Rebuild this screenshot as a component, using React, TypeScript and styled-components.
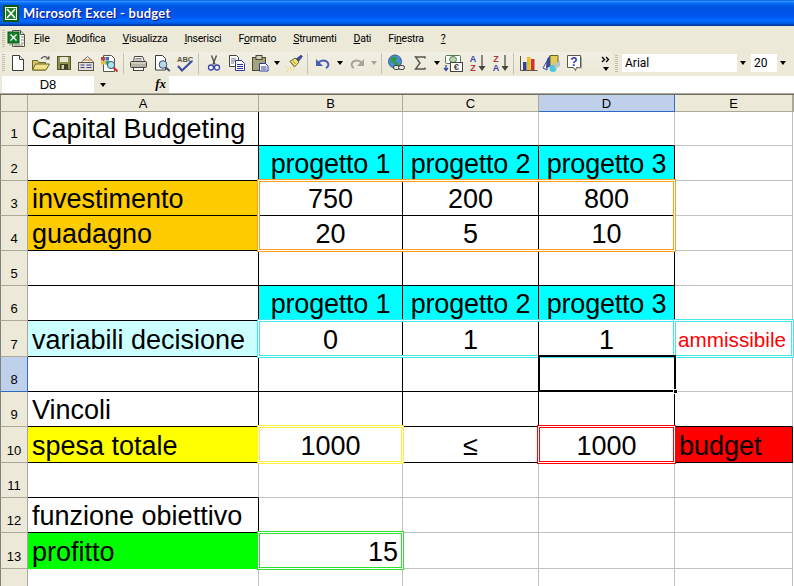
import React from "react";
import styled, { createGlobalStyle } from "styled-components";

const GlobalStyle = createGlobalStyle`
  html, body {
    margin: 0;
    padding: 0;
    background: #fff;
  }
`;

const Window = styled.div`
  width: 794px;
  height: 586px;
  overflow: hidden;
  display: flex;
  flex-direction: column;
  background: #ece9d8;
  font-family: "Liberation Sans", Arial, sans-serif;
`;

const TitleBar = styled.div`
  height: 26px;
  flex: none;
  display: flex;
  align-items: center;
  gap: 4px;
  padding-left: 3px;
  background: linear-gradient(180deg, #0058ee 0%, #3593ff 5%, #127dff 9%, #0262ee 16%, #0054e3 28%, #0055eb 56%, #005bf5 68%, #026afe 78%, #0062ef 86%, #0052d6 92%, #0040ab 96%, #003092 100%);
`;

const TitleText = styled.span`
  font-family: Lato, sans-serif;
  font-weight: bold;
  font-size: 13px;
  letter-spacing: 0.25px;
  color: #fff;
  text-shadow: 1px 1px 0 #0f1089;
`;

const MenuBar = styled.div`
  height: 26px;
  flex: none;
  display: flex;
  align-items: center;
`;

const Grip = styled.div<{ $h: number }>`
  width: 3px;
  height: ${(p) => p.$h}px;
  margin-left: 2px;
  flex: none;
  background: repeating-linear-gradient(180deg, #c1bea9 0 1px, transparent 1px 2px);
`;

const MenuIcon = styled.div`
  width: 29px;
  flex: none;
  display: flex;
  padding-left: 3px;
  box-sizing: border-box;
`;

const MenuItem = styled.span`
  font-family: Roboto, sans-serif;
  font-size: 10.5px;
  letter-spacing: -0.25px;
  line-height: 14px;
  color: #000;
  margin-right: 17px;
  u {
    text-underline-offset: 1px;
  }
`;

const ToolRow = styled.div`
  height: 24px;
  flex: none;
  display: flex;
  align-items: center;
`;

const Toolbar = styled.div<{ $w: number }>`
  width: ${(p) => p.$w}px;
  height: 24px;
  box-sizing: border-box;
  padding-bottom: 2px;
  flex: none;
  display: flex;
  align-items: center;
  background: linear-gradient(180deg, #f1efe3, #ece9d8);
`;

const ToolBtn = styled.div<{ $w?: number }>`
  width: ${(p) => p.$w ?? 23}px;
  height: 22px;
  flex: none;
  display: flex;
  align-items: center;
  justify-content: center;
`;

const ToolEnd = styled.div`
  flex: 1;
  display: flex;
  justify-content: flex-end;
  padding-right: 1px;
`;

const Sep = styled.div`
  width: 1px;
  height: 21px;
  margin: 0 3px 0 2px;
  flex: none;
  background: #c5c2b0;
`;

const DropArrow = styled.div<{ $off?: boolean }>`
  width: 0;
  height: 0;
  border-left: 3.5px solid transparent;
  border-right: 3.5px solid transparent;
  border-top: 4px solid ${(p) => (p.$off ? "#a6a498" : "#000")};
`;

const Combo = styled.div<{ $w: number }>`
  width: ${(p) => p.$w}px;
  height: 18px;
  box-sizing: border-box;
  flex: none;
  display: flex;
  align-items: center;
  background: #fff;
  font-family: Roboto, sans-serif;
  font-size: 12px;
  padding-left: 3px;
  margin: 0 2px 2px 0;
`;

const ComboText = styled.span`
  flex: 1;
`;

const ComboBtn = styled.div`
  width: 12px;
  height: 18px;
  flex: none;
  display: flex;
  align-items: center;
  justify-content: center;
  background: #ece9d8;
`;

const FormulaBar = styled.div`
  height: 17px;
  flex: none;
  display: flex;
  align-items: stretch;
`;

const NameBox = styled.div`
  width: 92px;
  margin-left: 2px;
  flex: none;
  background: #fff;
  font-size: 13px;
  line-height: 17px;
  text-align: center;
`;

const NameDrop = styled.div`
  width: 18px;
  flex: none;
  display: flex;
  align-items: center;
  justify-content: center;
`;

const FxBox = styled.div`
  width: 57px;
  box-sizing: border-box;
  padding-right: 3px;
  flex: none;
  text-align: right;
  font-family: "Liberation Serif", serif;
  font-style: italic;
  font-weight: bold;
  font-size: 13px;
  line-height: 16px;
`;

const FormulaInput = styled.div`
  flex: 1;
  background: #fff;
`;

const BarRule = styled.div`
  height: 2px;
  flex: none;
  background: linear-gradient(180deg, #aca899 50%, #716f64 50%);
`;

const columnWidths = [28, 231, 144, 136, 136, 118, 1];
const rowHeights = [17, 34, 35, 35, 35, 35, 35, 36, 35, 35, 36, 35, 35, 36, 35];

const Sheet = styled.div`
  flex: 1;
  display: grid;
  grid-template-columns: ${columnWidths.map((w) => `${w}px`).join(" ")};
  grid-template-rows: ${rowHeights.map((h) => `${h}px`).join(" ")};
  background: #fff;
  overflow: hidden;
`;

type Place = { $col: number; $row: number; $cols?: number; $rows?: number };

const placed = (p: Place) => `
  grid-column: ${p.$col + 1} / span ${p.$cols ?? 1};
  grid-row: ${p.$row + 1} / span ${p.$rows ?? 1};
`;

const ColHead = styled.div<Place & { $active?: boolean }>`
  ${placed}
  box-sizing: border-box;
  display: flex;
  align-items: center;
  justify-content: center;
  font-size: 13px;
  color: #000;
  background: ${(p) => (p.$active ? "#bfd0ea" : "#ece9d8")};
  border-right: 1px solid ${(p) => (p.$active ? "#316ac5" : "#aca899")};
  border-bottom: 1px solid ${(p) => (p.$active ? "#316ac5" : "#aca899")};
`;

const RowHead = styled.div<Place & { $active?: boolean }>`
  ${placed}
  box-sizing: border-box;
  display: flex;
  align-items: flex-end;
  justify-content: center;
  font-size: 13px;
  line-height: 15px;
  color: #000;
  padding-bottom: 4px;
  background: ${(p) => (p.$active ? "#bfd0ea" : "#ece9d8")};
  border-left: 1px solid #808080;
  border-right: 1px solid ${(p) => (p.$active ? "#316ac5" : "#aca899")};
  border-bottom: 1px solid ${(p) => (p.$active ? "#316ac5" : "#aca899")};
`;

const Cell = styled.div<
  Place & {
    $fill?: string;
    $right?: boolean;
    $bottom?: boolean;
    $align?: string;
    $ink?: string;
    $small?: boolean;
    $tight?: boolean;
  }
>`
  ${placed}
  box-sizing: border-box;
  min-width: 0;
  white-space: nowrap;
  overflow: hidden;
  padding: 0 4px 0 ${(p) => (p.$small ? 3 : 4)}px;
  display: flex;
  align-items: flex-end;
  justify-content: ${(p) => p.$align ?? "flex-start"};
  font-size: ${(p) => (p.$small ? "20.7px" : "27px")};
  letter-spacing: ${(p) => (p.$tight ? "-0.2px" : "0")};
  line-height: 32px;
  color: ${(p) => p.$ink ?? "#000"};
  background: ${(p) => p.$fill ?? "#fff"};
  border-right: 1px solid ${(p) => (p.$right ? "#000" : p.$fill ?? "#c0c0c0")};
  border-bottom: 1px solid ${(p) => (p.$bottom ? "#000" : p.$fill ?? "#c0c0c0")};
`;

const RangeMark = styled.div<Place & { $c: string }>`
  ${placed}
  margin: -2px -1px -1px -2px;
  border: 1px solid ${(p) => p.$c};
  box-shadow: inset 0 0 0 1px #fff, inset 0 0 0 2px ${(p) => p.$c};
  z-index: 2;
  pointer-events: none;
`;

const Selection = styled.div<Place>`
  ${placed}
  position: relative;
  margin: -2px -1px 0 -1px;
  border: 2px solid #000;
  z-index: 3;
`;

const Handle = styled.div`
  position: absolute;
  right: -4px;
  bottom: -4px;
  width: 5px;
  height: 5px;
  background: #000;
  border: 1px solid #fff;
  box-sizing: border-box;
`;

const Svg = styled.svg`
  display: block;
  flex: none;
  overflow: visible;
`;

const Ico = ({ children, w = 18, h = 18 }: { children: React.ReactNode; w?: number; h?: number }) => (
  <Svg width={w} height={h} viewBox={`0 0 ${w} ${h}`}>
    {children}
  </Svg>
);

const ExcelLogo = () => (
  <Ico w={16} h={17}>
    <rect x="0" y="0" width="16" height="17" fill="#0a5d0a" />
    <rect x="2" y="2" width="12" height="13" fill="#fff" />
    <rect x="3" y="3" width="10" height="11" fill="#1f7f2a" />
    <path d="M4 4l8 9M12 4l-8 9" stroke="#fff" strokeWidth="1.6" />
  </Ico>
);

const XlsDoc = () => (
  <Ico w={18} h={18}>
    <path d="M4.5 .5h8l4 4v12h-12z" fill="#fff" stroke="#55554a" />
    <path d="M12.5 .5v4h4" fill="#d8d6c8" stroke="#55554a" />
    <path d="M13 7h3M13 10h3M13 13h3M6 15h9" stroke="#8a8878" />
    <rect x="0" y="2" width="11" height="11" fill="#12802a" stroke="#0a5512" />
    <path d="M2.5 4.5l6 6M8.5 4.5l-6 6" stroke="#fff" strokeWidth="1.4" />
    <path d="M1 13.5h11v2h-11z" fill="#7f9f7f" opacity=".5" />
  </Ico>
);

const NewDoc = () => (
  <Ico>
    <path d="M3.5 1.5h7l4 4v11h-11z" fill="#fff" stroke="#3d3d38" />
    <path d="M10.5 1.5v4h4" fill="#e6e4d8" stroke="#3d3d38" />
  </Ico>
);

const OpenFolder = () => (
  <Ico w={20}>
    <path d="M1.5 6.5h5l1 2h7v7.5h-13z" fill="#d6c66a" stroke="#6a6528" />
    <path d="M1.5 16l3-6h14l-3.5 6z" fill="#f0e088" stroke="#6a6528" />
    <path d="M10 5c1.5-2.5 4-3 6-1.5" fill="none" stroke="#555" strokeWidth="1.2" />
    <path d="M14.5 5.5h4v-4z" fill="#555" />
  </Ico>
);

const Floppy = () => (
  <Ico>
    <rect x="2.5" y="2.5" width="13" height="13" fill="#8f8f4e" stroke="#55552b" />
    <rect x="5" y="3" width="8" height="5" fill="#e6e6d2" />
    <rect x="5" y="10" width="8" height="5.5" fill="#3e3e24" />
    <rect x="6.5" y="11" width="2.5" height="4" fill="#cfcfb2" />
  </Ico>
);

const MailDoc = () => (
  <Ico w={20}>
    <path d="M4.5 8l6-5.5 6 5.5v3h-12z" fill="#f4f2ec" stroke="#6f6f6a" />
    <path d="M6 6h9" stroke="#d07030" />
    <rect x="1.5" y="8.5" width="15" height="8" fill="#e2e0d4" stroke="#55554a" />
    <path d="M3.5 11h4M3.5 13.5h4M9.5 11h5M9.5 13.5h5" stroke="#3f3f8a" />
  </Ico>
);

const Permission = () => (
  <Ico w={20}>
    <path d="M3.5 1.5h8l3 3v13h-11z" fill="#fff" stroke="#55554a" />
    <rect x="1" y="3" width="4" height="3.5" fill="#c84030" />
    <rect x="5.5" y="3" width="3.5" height="3.5" fill="#3d6fc0" />
    <rect x="1" y="7" width="4" height="3.5" fill="#e8c040" />
    <rect x="5.5" y="7" width="3.5" height="3.5" fill="#3fa04a" />
    <circle cx="11" cy="11" r="3.6" fill="#a8e4e8" stroke="#3d5a80" />
    <path d="M13.5 13.5l4 4" stroke="#d02828" strokeWidth="2" />
  </Ico>
);

const Printer = () => (
  <Ico w={20}>
    <path d="M5.5 2.5h8l2 5h-11z" fill="#fff" stroke="#44443c" />
    <path d="M6.5 4.5h6M6 6h7" stroke="#888" />
    <rect x="1.5" y="7.5" width="16" height="6" rx="1" fill="#b6b4a4" stroke="#44443c" />
    <path d="M2.5 9h14" stroke="#e8e6da" />
    <rect x="4.5" y="13.5" width="10" height="3" fill="#fff" stroke="#44443c" />
  </Ico>
);

const Preview = () => (
  <Ico w={20}>
    <path d="M3.5 1.5h7l3 3v11.5h-10z" fill="#fff" stroke="#3d3d38" />
    <circle cx="11" cy="10.5" r="3.8" fill="#b8d8ec" stroke="#3d4d66" />
    <path d="M13.8 13.5l4 3.5" stroke="#3d4d66" strokeWidth="2" />
  </Ico>
);

const Spell = () => (
  <Ico w={20}>
    <text x="2" y="7.5" fontFamily="Liberation Sans" fontSize="7.5" fontWeight="bold" fill="#55554a">ABC</text>
    <path d="M3 12l4 4.5 10-9.5" fill="none" stroke="#3a4aa0" strokeWidth="2" />
  </Ico>
);

const Scissors = () => (
  <Ico>
    <path d="M6.5 1.5l3.5 9M11.5 1.5l-3.5 9" stroke="#4a4a46" strokeWidth="1.3" />
    <circle cx="6" cy="13.5" r="2.5" fill="#fff" stroke="#3a46a8" strokeWidth="1.3" />
    <circle cx="12" cy="13.5" r="2.5" fill="#fff" stroke="#3a46a8" strokeWidth="1.3" />
  </Ico>
);

const CopyDocs = () => (
  <Ico>
    <path d="M1.5 1.5h7l2 2v9h-9z" fill="#fff" stroke="#44443c" />
    <path d="M3 5h5M3 7h5M3 9h3" stroke="#777" />
    <path d="M7.5 6.5h6l3 3v7h-9z" fill="#fff" stroke="#2f3a96" />
    <path d="M9 10.5h6M9 12.5h6M9 14.5h6" stroke="#2f3a96" />
  </Ico>
);

const Clipboard = () => (
  <Ico>
    <rect x="1.5" y="3.5" width="13" height="13" fill="#a3a37e" stroke="#4a4a34" />
    <rect x="5" y="1.5" width="6" height="4" fill="#d4d2b8" stroke="#4a4a34" />
    <path d="M8.5 9.5h6l2.5 2.5v5h-8.5z" fill="#fff" stroke="#2f3a96" />
    <path d="M10 13h5.5M10 15h5.5" stroke="#2f3a96" />
  </Ico>
);

const Brush = () => (
  <Ico>
    <path d="M11 5l5-4 1.5 1.5-4 5z" fill="#3a4aa0" stroke="#2a2a60" strokeWidth=".5" />
    <path d="M5 7.5l5-3.5 4 4-4.5 5z" fill="#f2e27a" stroke="#6a6528" />
    <path d="M7.5 6.5l4 4M6 8l3.5 4" stroke="#b0a040" />
    <path d="M1 13h1M3 15h1M5 13.5h1M6 16h1M2 17h1M8 15h1" stroke="#e8d820" strokeWidth="1.2" />
  </Ico>
);

const UndoArrow = ({ off }: { off?: boolean }) => (
  <Ico>
    <g transform={off ? "matrix(-1 0 0 1 18 0)" : undefined}>
      <path d="M4 9c3-3.5 8-3.5 10 0 1 2 0 4-2 5" fill="none" stroke={off ? "#a6a498" : "#4a5cb8"} strokeWidth="2" />
      <path d="M2 5v7h7z" fill={off ? "#a6a498" : "#4a5cb8"} />
    </g>
  </Ico>
);

const Globe = () => (
  <Ico w={20}>
    <circle cx="8" cy="7.5" r="6.5" fill="#4a8ed8" stroke="#3c5a86" />
    <path d="M4 3.5l4-1 2 2-2 3 3 1 1 3-3 1-2-3-3-2z" fill="#2f9a42" />
    <rect x="6.5" y="11.5" width="6" height="4" rx="2" fill="#e8e6da" stroke="#333" />
    <rect x="11.5" y="11.5" width="6" height="4" rx="2" fill="#e8e6da" stroke="#333" />
  </Ico>
);

const Sigma = () => (
  <Ico w={14}>
    <path d="M12 4.5V3H2.5l4.5 6-4.5 6H12v-1.5" fill="none" stroke="#55554a" strokeWidth="1.4" />
  </Ico>
);

const EuroSheet = () => (
  <Ico w={20}>
    <rect x="1.5" y="1.5" width="15" height="8" rx="1" fill="#fff" stroke="#557a55" />
    <ellipse cx="9" cy="5.5" rx="3.5" ry="3" fill="#b8d8b0" stroke="#557a55" />
    <path d="M2 11v5m-2-2l2 2.5 2-2.5" fill="none" stroke="#3a4aa0" strokeWidth="1.3" />
    <rect x="6.5" y="8.5" width="12" height="9" fill="#fff" stroke="#44443c" />
    <text x="12.5" y="16" textAnchor="middle" fontFamily="Liberation Sans" fontSize="9.5" fontWeight="bold" fill="#44443c">€</text>
  </Ico>
);

const SortIcon = ({ top, bottom, topInk, bottomInk }: { top: string; bottom: string; topInk: string; bottomInk: string }) => (
  <Ico w={20}>
    <text x="6" y="8" textAnchor="middle" fontFamily="Liberation Sans" fontSize="9" fontWeight="bold" fill={topInk}>{top}</text>
    <text x="6" y="17" textAnchor="middle" fontFamily="Liberation Sans" fontSize="9" fontWeight="bold" fill={bottomInk}>{bottom}</text>
    <path d="M15 1v12" stroke="#44443c" strokeWidth="1.2" />
    <path d="M11.5 12h7L15 17z" fill="#44443c" />
  </Ico>
);

const ChartIcon = () => (
  <Ico w={20}>
    <path d="M1.5 2v14.5h17" fill="none" stroke="#55554a" />
    <rect x="4" y="8" width="3.5" height="8" fill="#2f3fa8" />
    <rect x="8" y="3" width="3.5" height="13" fill="#e8c020" />
    <rect x="12" y="5" width="3.5" height="11" fill="#d8302a" />
  </Ico>
);

const DrawingIcon = () => (
  <Ico w={20}>
    <path d="M8 1.5h8v9l-8 2z" fill="#e0cc60" stroke="#6a6528" />
    <path d="M5 5l3-3.5v11l-4 2z" fill="#3a4aa0" />
    <path d="M1 14l4-7v9z" fill="none" stroke="#3a4aa0" />
    <circle cx="11" cy="14.5" r="3.5" fill="#4ac8e0" />
    <path d="M12 10l6-3v5l-5 3z" fill="#b8c4c8" />
  </Ico>
);

const HelpIcon = () => (
  <Ico w={20}>
    <path d="M2.5 1.5h13v12h-4l-1 3-2-3h-6z" fill="#fff" stroke="#55554a" />
    <path d="M16.5 3v11h-4" fill="none" stroke="#aca899" />
    <text x="9" y="12" textAnchor="middle" fontFamily="Liberation Sans" fontSize="12" fontWeight="bold" fill="#3a3aa8">?</text>
  </Ico>
);

const Chevrons = () => (
  <Ico w={10} h={17}>
    <path d="M1 2l2.5 2.5L1 7M5 2l2.5 2.5L5 7" fill="none" stroke="#000" strokeWidth="1.4" />
    <path d="M2 12h6l-3 4z" fill="#000" />
  </Ico>
);

const menus: [string, string, string][] = [
  ["", "F", "ile"],
  ["", "M", "odifica"],
  ["", "V", "isualizza"],
  ["", "I", "nserisci"],
  ["F", "o", "rmato"],
  ["", "S", "trumenti"],
  ["", "D", "ati"],
  ["Fi", "n", "estra"],
  ["", "?", ""],
];

const CYAN = "#00ffff";
const ORANGE = "#ffcc00";
const PALE = "#ccffff";
const YELLOW = "#ffff00";
const GREEN = "#00ff00";
const RED = "#ff0000";

type CellData = { text?: string; fill?: string; align?: string; ink?: string; small?: boolean; tight?: boolean };

const c = (text: string): CellData => ({ text, align: "center" });
const h = (text: string): CellData => ({ text, align: "center", fill: CYAN, tight: true });
const heads = [h("progetto 1"), h("progetto 2"), h("progetto 3")];

const rows: CellData[][] = [
  [{ text: "Capital Budgeting" }],
  [{}, ...heads],
  [{ text: "investimento", fill: ORANGE }, c("750"), c("200"), c("800")],
  [{ text: "guadagno", fill: ORANGE }, c("20"), c("5"), c("10")],
  [],
  [{}, ...heads],
  [{ text: "variabili decisione", fill: PALE }, c("0"), c("1"), c("1"), { text: "ammissibile", ink: RED, small: true }],
  [],
  [{ text: "Vincoli" }],
  [{ text: "spesa totale", fill: YELLOW }, c("1000"), c("≤"), c("1000"), { text: "budget", fill: RED }],
  [],
  [{ text: "funzione obiettivo" }],
  [{ text: "profitto", fill: GREEN }, { text: "15", align: "flex-end" }],
  [],
];

// cells with a drawn black border, column and row counted from 0
const boxed = (col: number, row: number) => {
  if (col === 0) return row <= 9 || row === 11;
  if (col <= 3) return row >= 1 && row <= 9;
  return col === 4 && row === 9;
};

const colNames = ["A", "B", "C", "D", "E"];

export default function App() {
  return (
    <Window>
      <GlobalStyle />
      <TitleBar>
        <ExcelLogo />
        <TitleText>Microsoft Excel - budget</TitleText>
      </TitleBar>
      <MenuBar>
        <Grip $h={18} />
        <MenuIcon>
          <XlsDoc />
        </MenuIcon>
        {menus.map(([before, key, after]) => (
          <MenuItem key={before + key + after}>
            {before}
            <u>{key}</u>
            {after}
          </MenuItem>
        ))}
      </MenuBar>
      <ToolRow>
        <Toolbar $w={612}>
          <Grip $h={18} />
          <ToolBtn $w={1} />
          <ToolBtn><NewDoc /></ToolBtn>
          <ToolBtn><OpenFolder /></ToolBtn>
          <ToolBtn><Floppy /></ToolBtn>
          <ToolBtn><MailDoc /></ToolBtn>
          <ToolBtn><Permission /></ToolBtn>
          <Sep />
          <ToolBtn><Printer /></ToolBtn>
          <ToolBtn><Preview /></ToolBtn>
          <ToolBtn><Spell /></ToolBtn>
          <Sep />
          <ToolBtn><Scissors /></ToolBtn>
          <ToolBtn><CopyDocs /></ToolBtn>
          <ToolBtn><Clipboard /></ToolBtn>
          <ToolBtn $w={11}><DropArrow /></ToolBtn>
          <ToolBtn><Brush /></ToolBtn>
          <Sep />
          <ToolBtn><UndoArrow /></ToolBtn>
          <ToolBtn $w={11}><DropArrow /></ToolBtn>
          <ToolBtn><UndoArrow off /></ToolBtn>
          <ToolBtn $w={11}><DropArrow $off /></ToolBtn>
          <Sep />
          <ToolBtn><Globe /></ToolBtn>
          <ToolBtn><Sigma /></ToolBtn>
          <ToolBtn $w={11}><DropArrow /></ToolBtn>
          <ToolBtn><EuroSheet /></ToolBtn>
          <ToolBtn><SortIcon top="A" bottom="Z" topInk="#3a46a8" bottomInk="#a83a3a" /></ToolBtn>
          <ToolBtn><SortIcon top="Z" bottom="A" topInk="#a83a3a" bottomInk="#3a46a8" /></ToolBtn>
          <Sep />
          <ToolBtn><ChartIcon /></ToolBtn>
          <ToolBtn><DrawingIcon /></ToolBtn>
          <ToolBtn><HelpIcon /></ToolBtn>
          <ToolEnd><Chevrons /></ToolEnd>
        </Toolbar>
        <ToolBtn $w={1} />
        <Grip $h={18} />
        <ToolBtn $w={4} />
        <Combo $w={127}>
          <ComboText>Arial</ComboText>
          <ComboBtn><DropArrow /></ComboBtn>
        </Combo>
        <Combo $w={38}>
          <ComboText>20</ComboText>
          <ComboBtn><DropArrow /></ComboBtn>
        </Combo>
      </ToolRow>
      <FormulaBar>
        <NameBox>D8</NameBox>
        <NameDrop><DropArrow /></NameDrop>
        <FxBox>fx</FxBox>
        <FormulaInput />
      </FormulaBar>
      <BarRule />
      <Sheet>
        <RowHead $col={0} $row={0} />
        {colNames.map((n, col) => (
          <ColHead key={n} $col={col + 1} $row={0} $active={n === "D"}>{n}</ColHead>
        ))}
        <ColHead $col={6} $row={0} />
        {rows.map((row, r) => (
          <React.Fragment key={r}>
            <RowHead $col={0} $row={r + 1} $active={r === 7}>{r + 1}</RowHead>
            {colNames.map((n, col) => {
              const cell = row[col] ?? {};
              return (
                <Cell
                  key={n}
                  $col={col + 1}
                  $row={r + 1}
                  $fill={cell.fill}
                  $align={cell.align}
                  $ink={cell.ink}
                  $small={cell.small}
                  $tight={cell.tight}
                  $right={boxed(col, r) || boxed(col + 1, r)}
                  $bottom={boxed(col, r) || boxed(col, r + 1)}
                >
                  {cell.text}
                </Cell>
              );
            })}
          </React.Fragment>
        ))}
        <RangeMark $col={2} $row={3} $cols={3} $rows={2} $c="#ffa020" />
        <RangeMark $col={2} $row={7} $cols={3} $c="#40e8f0" />
        <RangeMark $col={5} $row={7} $c="#40e8f0" />
        <RangeMark $col={2} $row={10} $c="#fff040" />
        <RangeMark $col={4} $row={10} $c="#ff0000" />
        <RangeMark $col={2} $row={13} $c="#30e030" />
        <Selection $col={4} $row={8}>
          <Handle />
        </Selection>
      </Sheet>
    </Window>
  );
}
